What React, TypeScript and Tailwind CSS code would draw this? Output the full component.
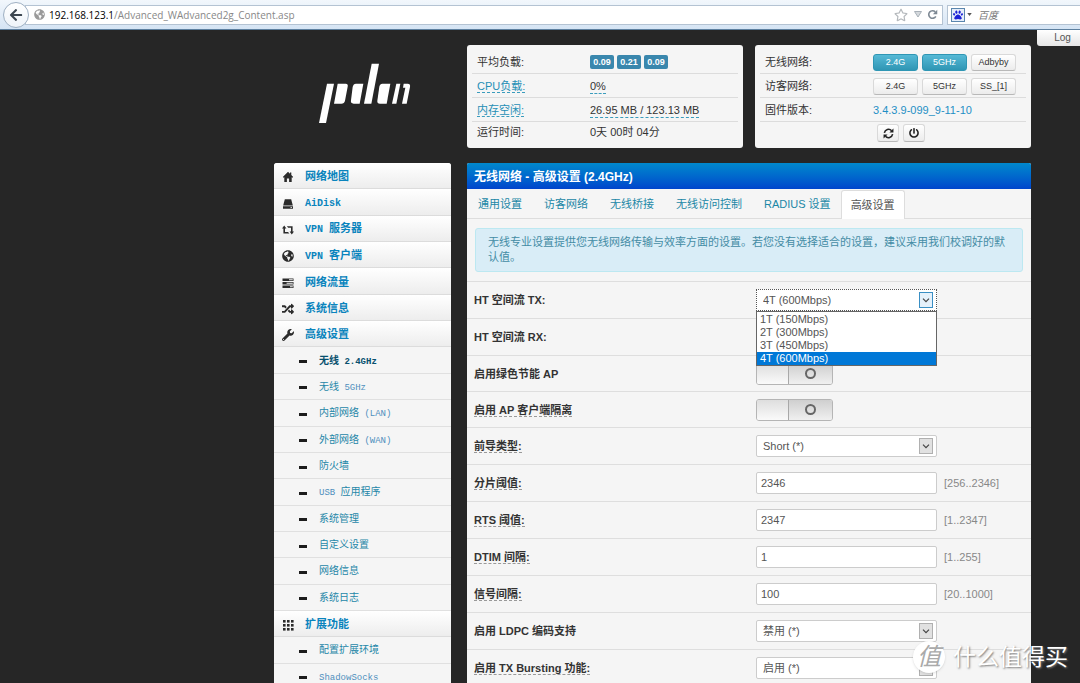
import React, { useState } from "react";
import { FaArrowLeft, FaGlobeAmericas, FaPaw, FaPowerOff, FaRandom, FaRegStar, FaWrench } from "react-icons/fa";

type IconProps = { className?: string };
type Icon = React.ComponentType<IconProps>;

const HomeIcon: Icon = ({ className }) => (
  <svg viewBox="0 0 12 12" className={className} fill="currentColor">
    <path d="M6 0.8 L0.8 6 L1.6 6.8 L2.3 6.2 V11 H4.9 V7.6 H7.1 V11 H9.7 V6.2 L10.4 6.8 L11.2 6 L9.3 4.1 V1.6 H8 V2.8 Z" />
  </svg>
);

const DiskIcon: Icon = ({ className }) => (
  <svg viewBox="0 0 12 12" className={className} fill="currentColor">
    <path d="M2.8 1.2 H9.2 L10.8 7.4 H1.2 Z" />
    <path fillRule="evenodd" d="M1 8.2 H11 V10.8 H1 Z M8.6 9.1 V9.9 H9.8 V9.1 Z" />
  </svg>
);

const RetweetIcon: Icon = ({ className }) => (
  <svg viewBox="0 0 12 12" className={className} fill="currentColor">
    <path d="M2.2 1.6 L0 4.4 H1.4 V9.6 H7.4 L6 8 H3 V4.4 H4.4 Z" />
    <path d="M9.8 10.4 L12 7.6 H10.6 V2.2 H4.8 L6.2 3.8 H9 V7.6 H7.6 Z" />
  </svg>
);

const TasksIcon: Icon = ({ className }) => (
  <svg viewBox="0 0 12 12" className={className} fill="currentColor">
    <path
      fillRule="evenodd"
      d="M0.5 1.5 H11.5 V4 H0.5 Z M7 2.3 V3.2 H10.8 V2.3 Z M0.5 5 H11.5 V7.5 H0.5 Z M4.6 5.8 V6.7 H10.8 V5.8 Z M0.5 8.5 H11.5 V11 H0.5 Z M8 9.3 V10.2 H10.8 V9.3 Z"
    />
  </svg>
);

const GridIcon: Icon = ({ className }) => (
  <svg viewBox="0 0 12 12" className={className} fill="currentColor">
    {[1, 5, 9].map((y) => [1, 5, 9].map((x) => <rect key={`${x}-${y}`} x={x} y={y} width="2.6" height="2.6" />))}
  </svg>
);

const RefreshIcon: Icon = ({ className }) => (
  <svg viewBox="0 0 12 12" className={className}>
    <path d="M1.5 5.2 A4.6 4.6 0 0 1 9.4 2.9 M10.5 6.8 A4.6 4.6 0 0 1 2.6 9.1" fill="none" stroke="currentColor" strokeWidth="1.7" />
    <path d="M11.4 0.6 V5 H7 Z M0.6 11.4 V7 H5 Z" fill="currentColor" />
  </svg>
);

const ReloadIcon: Icon = ({ className }) => (
  <svg viewBox="0 0 12 12" className={className}>
    <path d="M9.6 8 A4.1 4.1 0 1 1 9 3.2" fill="none" stroke="currentColor" strokeWidth="1.8" />
    <path d="M11.2 0.8 V5.6 H6.4 Z" fill="currentColor" />
  </svg>
);

type MenuItem = { label: string; icon?: Icon; active?: boolean };

const menu: MenuItem[] = [
  { label: "网络地图", icon: HomeIcon },
  { label: "AiDisk", icon: DiskIcon },
  { label: "VPN 服务器", icon: RetweetIcon },
  { label: "VPN 客户端", icon: FaGlobeAmericas },
  { label: "网络流量", icon: TasksIcon },
  { label: "系统信息", icon: FaRandom },
  { label: "高级设置", icon: FaWrench },
  { label: "无线 2.4GHz", active: true },
  { label: "无线 5GHz" },
  { label: "内部网络 (LAN)" },
  { label: "外部网络 (WAN)" },
  { label: "防火墙" },
  { label: "USB 应用程序" },
  { label: "系统管理" },
  { label: "自定义设置" },
  { label: "网络信息" },
  { label: "系统日志" },
  { label: "扩展功能", icon: GridIcon },
  { label: "配置扩展环境" },
  { label: "ShadowSocks" },
];

const tabs = ["通用设置", "访客网络", "无线桥接", "无线访问控制", "RADIUS 设置", "高级设置"];

const streams = ["1T (150Mbps)", "2T (300Mbps)", "3T (450Mbps)", "4T (600Mbps)"];

type Field = {
  id: string;
  label: string;
  kind: "select" | "switch" | "text";
  value?: string;
  hint?: string;
  help?: boolean;
  open?: boolean;
};

const fields: Field[] = [
  { id: "stream_tx", label: "HT 空间流 TX:", kind: "select", value: "4T (600Mbps)", open: true },
  { id: "stream_rx", label: "HT 空间流 RX:", kind: "select", value: "4T (600Mbps)" },
  { id: "greenap", label: "启用绿色节能 AP", kind: "switch" },
  { id: "ap_isolate", label: "启用 AP 客户端隔离", kind: "switch", help: true },
  { id: "preamble", label: "前导类型:", kind: "select", value: "Short (*)", help: true },
  { id: "frag", label: "分片阈值:", kind: "text", value: "2346", hint: "[256..2346]", help: true },
  { id: "rts", label: "RTS 阈值:", kind: "text", value: "2347", hint: "[1..2347]", help: true },
  { id: "dtim", label: "DTIM 间隔:", kind: "text", value: "1", hint: "[1..255]", help: true },
  { id: "bcn", label: "信号间隔:", kind: "text", value: "100", hint: "[20..1000]", help: true },
  { id: "ldpc", label: "启用 LDPC 编码支持", kind: "select", value: "禁用 (*)" },
  { id: "burst", label: "启用 TX Bursting 功能:", kind: "select", value: "启用 (*)", help: true },
];

const BrowserBar: React.FC = () => (
  <div className="flex h-[30px] shrink-0 items-center gap-1 border-b border-[#5d7f9f] bg-gradient-to-b from-[#f2f7fc] to-[#d5e4f4] font-['Open_Sans','Noto_Sans_CJK_SC',sans-serif] text-[10px]">
    <div className="flex min-w-0 flex-1 items-center">
      <button
        aria-label="Back"
        className="z-10 ml-[3px] flex size-[26px] shrink-0 items-center justify-center rounded-full border border-[#9fb0c2] bg-gradient-to-b from-white to-[#eef3f9] text-[#3c4650]"
      >
        <FaArrowLeft className="size-[14px]" />
      </button>
      <div className="-ml-1 flex h-5 min-w-0 flex-1 items-center border border-[#b4c3d3] bg-white pl-2">
        <FaGlobeAmericas className="size-[11px] shrink-0 text-[#9a9a9a]" />
        <span className="ml-1 flex-1 truncate text-[#888]">
          <span className="text-black">192.168.123.1</span>/Advanced_WAdvanced2g_Content.asp
        </span>
        <FaRegStar className="mr-[6px] size-[14px] text-[#b4b8bc]" />
        <svg viewBox="0 0 8 7" className="mr-[5px] h-[7px] w-2 fill-[#d5d9dd] stroke-[#a8b0b8]">
          <path d="M0.5 0.5 H7.5 L4 6 Z" />
        </svg>
        <button aria-label="Reload" className="mr-1 text-[#7e8994]">
          <ReloadIcon className="size-[11px]" />
        </button>
      </div>
    </div>
    <div className="flex h-5 w-[133px] items-center border border-r-0 border-[#b4c3d3] bg-white pl-[3px]">
      <span className="flex size-[14px] items-center justify-center border border-[#5a86ae] bg-[#e6eefa] text-[#1c22d6]">
        <FaPaw className="size-[10px]" />
      </span>
      <svg viewBox="0 0 6 4" className="ml-[2px] h-[3px] w-[5px] fill-[#555]">
        <path d="M0 0 H6 L3 4 Z" />
      </svg>
      <input
        aria-label="Search"
        placeholder="百度"
        className="ml-[6px] w-20 italic outline-none placeholder:text-[#777]"
      />
    </div>
  </div>
);

const Logo: React.FC = () => (
  <svg viewBox="0 0 276 180" className="h-[60px] w-[92px]" fill="#fff" role="img" aria-label="pdcn">
    <path d="M24 62 H45 L21 180 H0 Z" />
    <path d="M56 62 H80 Q88 62 86 71 L78 113 Q76 122 67 122 H45 Z" />
    <path d="M111 62 H133 L122 122 H104 Q94 122 96 112 L101 72 Q103 62 111 62 Z" />
    <path d="M158 2 H180 L157 122 H135 Z" />
    <path d="M190 62 H214 L203 122 H183 Q174 122 175 113 L181 71 Q183 62 190 62 Z" />
    <path d="M232 62 H244 L232 122 H219 Z" />
    <path d="M254 62 H266 Q275 62 273 72 L263 122 H249 L259 74 H252 Z" />
  </svg>
);

const rowClass = "mx-[5px] flex h-6 items-center border-b border-[#dcdcdc] pl-[5px] pt-px";

const StatusCard: React.FC = () => (
  <section className="min-w-0 flex-1 rounded-[3px] bg-[#f5f5f5] pb-1 pt-[5px] text-[#333]">
    <div className={rowClass}>
      <span className="w-[113px]">平均负载:</span>
      <span className="flex gap-[3px]">
        {["0.09", "0.21", "0.09"].map((n, i) => (
          <span
            key={i}
            className="flex h-[14px] w-6 items-center justify-center rounded-[2px] bg-[#3a87ad] text-[9px] font-bold text-white"
          >
            {n}
          </span>
        ))}
      </span>
    </div>
    <div className={rowClass}>
      <span className="w-[113px]">
        <a href="#cpu" className="border-b border-dashed border-[#3a9cbd] text-[#1f8fb5]">CPU负载:</a>
      </span>
      <span className="border-b border-dashed border-[#3a9cbd]">0%</span>
    </div>
    <div className={rowClass}>
      <span className="w-[113px]">
        <a href="#mem" className="border-b border-dashed border-[#3a9cbd] text-[#1f8fb5]">内存空闲:</a>
      </span>
      <span className="border-b border-dashed border-[#3a9cbd]">26.95 MB / 123.13 MB</span>
    </div>
    <div className="mx-[5px] flex h-5 items-center pl-[5px]">
      <span className="w-[113px]">运行时间:</span>
      <span>0天 00时 04分</span>
    </div>
  </section>
);

const MiniButton: React.FC<{ on?: boolean; children: React.ReactNode }> = ({ on, children }) => (
  <button
    className={
      on
        ? "h-[17px] w-[45px] rounded-[3px] border border-[#2f96b4] bg-gradient-to-b from-[#55b9d6] to-[#2f96b4] text-[9px] leading-3 text-white"
        : "h-[17px] w-[45px] rounded-[3px] border border-[#d9d9d9] border-b-[#b8b8b8] bg-gradient-to-b from-white to-[#ececec] text-[9px] leading-3 text-[#333]"
    }
  >
    {children}
  </button>
);

const IconButton: React.FC<{ label: string; children: React.ReactNode }> = ({ label, children }) => (
  <button
    aria-label={label}
    className="flex h-[18px] w-[22px] items-center justify-center rounded-[3px] border border-[#d9d9d9] border-b-[#b8b8b8] bg-gradient-to-b from-white to-[#ececec] text-[#222]"
  >
    {children}
  </button>
);

const WirelessCard: React.FC = () => (
  <section className="min-w-0 flex-1 rounded-[3px] bg-[#f5f5f5] pb-1 pt-[5px] text-[#333]">
    <div className={rowClass}>
      <span className="w-[108px]">无线网络:</span>
      <span className="flex gap-1">
        <MiniButton on>2.4G</MiniButton>
        <MiniButton on>5GHz</MiniButton>
        <MiniButton>Adbyby</MiniButton>
      </span>
    </div>
    <div className={rowClass}>
      <span className="w-[108px]">访客网络:</span>
      <span className="flex gap-1">
        <MiniButton>2.4G</MiniButton>
        <MiniButton>5GHz</MiniButton>
        <MiniButton>SS_[1]</MiniButton>
      </span>
    </div>
    <div className={rowClass}>
      <span className="w-[108px]">固件版本:</span>
      <a href="#firmware" className="text-[#1f8fc5]">3.4.3.9-099_9-11-10</a>
    </div>
    <div className="flex h-[22px] items-center gap-1 pl-[122px]">
      <IconButton label="Refresh">
        <RefreshIcon className="size-[11px]" />
      </IconButton>
      <IconButton label="Power">
        <FaPowerOff className="size-[10px]" />
      </IconButton>
    </div>
  </section>
);

// Latin runs are set a size smaller than the Chinese characters around them
const MenuLabel: React.FC<{ text: string; latin: string }> = ({ text, latin }) => (
  <span>
    {text.split(/([\x20-\x7e]+)/).map((part, i) =>
      i % 2 ? (
        <span key={i} className={latin}>
          {part}
        </span>
      ) : (
        part
      )
    )}
  </span>
);

const Sidebar: React.FC = () => (
  <nav className="w-[177px] shrink-0 font-['Liberation_Mono','Noto_Sans_CJK_SC',monospace]">
    <ul className="grid h-[527px] auto-rows-fr overflow-hidden rounded-t-[3px] bg-[#f5f5f5]">
      {menu.map(({ label, icon: Icon, active }) => (
        <li key={label} className="min-h-0">
          {Icon ? (
            <a
              href="#menu"
              className="flex h-full items-center whitespace-pre border-b border-[#dcdcdc] bg-gradient-to-b from-white to-[#ededed] pl-2 pt-[3px] text-[11px] font-bold leading-4 text-[#0a84bd]"
            >
              <Icon className="mr-[11px] size-3 text-[#2b2b2b]" />
              <MenuLabel text={label} latin="text-[10px]" />
            </a>
          ) : (
            <a
              href="#menu"
              className={
                active
                  ? "flex h-full items-center whitespace-pre border-b border-[#e0e0e0] pl-[25px] pt-[3px] text-[10px] font-bold leading-4 text-[#07506e]"
                  : "flex h-full items-center whitespace-pre border-b border-[#e0e0e0] pl-[25px] pt-[3px] text-[10px] leading-4 text-[#1f87a8]"
              }
            >
              <span className="mr-3 h-[3px] w-2 bg-[#1c1c1c]" />
              <MenuLabel text={label} latin={active ? "text-[9px]" : "text-[9px] text-[#4f8fbd]"} />
            </a>
          )}
        </li>
      ))}
    </ul>
  </nav>
);

const SelectBox: React.FC<{ field: Field }> = ({ field }) => {
  const [value, setValue] = useState(field.value);
  const options = field.open ? streams : [field.value];
  return (
    <div className="relative w-[181px]">
      <select
        id={field.id}
        value={value}
        onChange={(e) => setValue(e.target.value)}
        className={
          field.open
            ? "block h-[22px] w-full appearance-none border border-dotted border-[#555] bg-white pl-[6px] text-[#555]"
            : "block h-[22px] w-full appearance-none rounded-[2px] border border-[#ccc] bg-white pl-[6px] text-[#555]"
        }
      >
        {options.map((o) => (
          <option key={o}>{o}</option>
        ))}
      </select>
      <span
        className={
          field.open
            ? "pointer-events-none absolute right-1 top-[3px] flex h-4 w-[14px] items-center justify-center border border-[#3a8fc4] bg-[#e5f1fb]"
            : "pointer-events-none absolute right-1 top-[3px] flex h-4 w-[14px] items-center justify-center border border-[#b0b0b0] bg-[#e1e1e1]"
        }
      >
        <svg viewBox="0 0 8 5" className="h-[5px] w-2 fill-none stroke-[#444]">
          <path d="M1 0.7 L4 3.7 L7 0.7" strokeWidth="1.2" />
        </svg>
      </span>
      {field.open && (
        <ul
          role="listbox"
          className="absolute left-0 top-[22px] z-10 w-full border border-[#666] bg-white pt-px text-[11px] leading-[13px] text-[#555]"
        >
          {streams.map((s) => (
            <li
              key={s}
              role="option"
              aria-selected={s === value}
              className={s === value ? "bg-[#0078d7] pl-[3px] text-white" : "pl-[3px]"}
            >
              {s}
            </li>
          ))}
        </ul>
      )}
    </div>
  );
};

const Switch: React.FC<{ id: string }> = ({ id }) => (
  <span className="relative flex h-[22px] w-[77px] overflow-hidden rounded-[3px] border border-[#b5b5b5]">
    <input id={id} type="checkbox" role="switch" className="absolute inset-0 z-[1] opacity-0" />
    <span className="w-8 border-r border-[#a8a8a8] bg-gradient-to-b from-[#dedede] to-[#fafafa]" />
    <span className="flex flex-1 items-center justify-center bg-gradient-to-b from-[#cfcfcf] to-[#f0f0f0]">
      <span className="size-[11px] rounded-full border-2 border-[#666]" />
    </span>
  </span>
);

const FieldRow: React.FC<{ field: Field }> = ({ field }) => (
  <div
    className={
      field.kind === "switch"
        ? "flex h-9 items-center border-t border-[#dedede] pl-[7px]"
        : "flex h-[37px] items-center border-t border-[#dedede] pl-[7px]"
    }
  >
    <div className="w-[282px] shrink-0 font-bold text-[#333]">
      <label htmlFor={field.id} className={field.help ? "border-b border-dashed border-[#999]" : ""}>
        {field.label}
      </label>
    </div>
    {field.kind === "select" && <SelectBox field={field} />}
    {field.kind === "switch" && <Switch id={field.id} />}
    {field.kind === "text" && (
      <input
        id={field.id}
        defaultValue={field.value}
        className="h-[22px] w-[181px] rounded-[2px] border border-[#ccc] bg-white pl-1 text-[#555]"
      />
    )}
    {field.hint && <span className="ml-[7px] text-[#888]">{field.hint}</span>}
  </div>
);

const SettingsPanel: React.FC = () => (
  <main className="min-w-0 flex-1 rounded-t-[2px] bg-[#f5f5f5]">
    <h1 className="flex h-[26px] items-center rounded-t-[2px] bg-gradient-to-b from-[#0088cc] to-[#0044cc] pl-[7px] pt-px text-[12px] font-bold text-white">
      无线网络 - 高级设置 (2.4GHz)
    </h1>
    <div className="flex h-[30px] items-stretch border-b border-[#ddd] pt-px">
      {tabs.map((t, i) => (
        <a
          key={t}
          href="#tab"
          className={
            i === tabs.length - 1
              ? "-mb-px -ml-px flex items-center rounded-t-[3px] border border-b-0 border-[#ddd] bg-white px-[9px] text-[#555]"
              : "flex items-center px-[11px] text-[#1b87a6]"
          }
        >
          {t}
        </a>
      ))}
    </div>
    <p className="mx-2 my-[9px] rounded-[3px] border border-[#bce8f1] bg-[#d9edf7] px-3 py-[6px] text-[11px] leading-[15px] text-[#448ca5]">
      无线专业设置提供您无线网络传输与效率方面的设置。若您没有选择适合的设置，建议采用我们校调好的默认值。
    </p>
    <form>
      {fields.map((f) => (
        <FieldRow key={f.id} field={f} />
      ))}
    </form>
  </main>
);

export default function App() {
  return (
    <div className="relative flex h-screen flex-col overflow-hidden bg-[#262626] font-['Liberation_Sans','Noto_Sans_CJK_SC',sans-serif] text-[11px] leading-[14px]">
      <BrowserBar />
      <button className="absolute right-0 top-[30px] h-4 w-[43px] rounded-bl-[3px] bg-gradient-to-b from-white to-[#e6e6e6] pl-2 text-[10px] leading-4 text-[#555]">
        Log
      </button>
      <div className="pl-[274px] pr-[49px] pt-[15px]">
        <header className="flex gap-4">
          <div className="flex w-[177px] shrink-0 justify-center pl-1 pt-[18px]">
            <Logo />
          </div>
          <div className="flex min-w-0 flex-1 gap-3">
            <StatusCard />
            <WirelessCard />
          </div>
        </header>
        <div className="mt-[15px] flex items-start gap-4">
          <Sidebar />
          <SettingsPanel />
        </div>
      </div>
      <div className="absolute bottom-[10px] right-3 z-20 flex items-center gap-2 text-white">
        <span className="flex size-8 items-center justify-center rounded-full bg-white text-[24px] italic text-[#aaa] shadow">
          值
        </span>
        <span className="text-[23px] leading-8 [text-shadow:1px_1px_2px_#777]">什么值得买</span>
      </div>
    </div>
  );
}
